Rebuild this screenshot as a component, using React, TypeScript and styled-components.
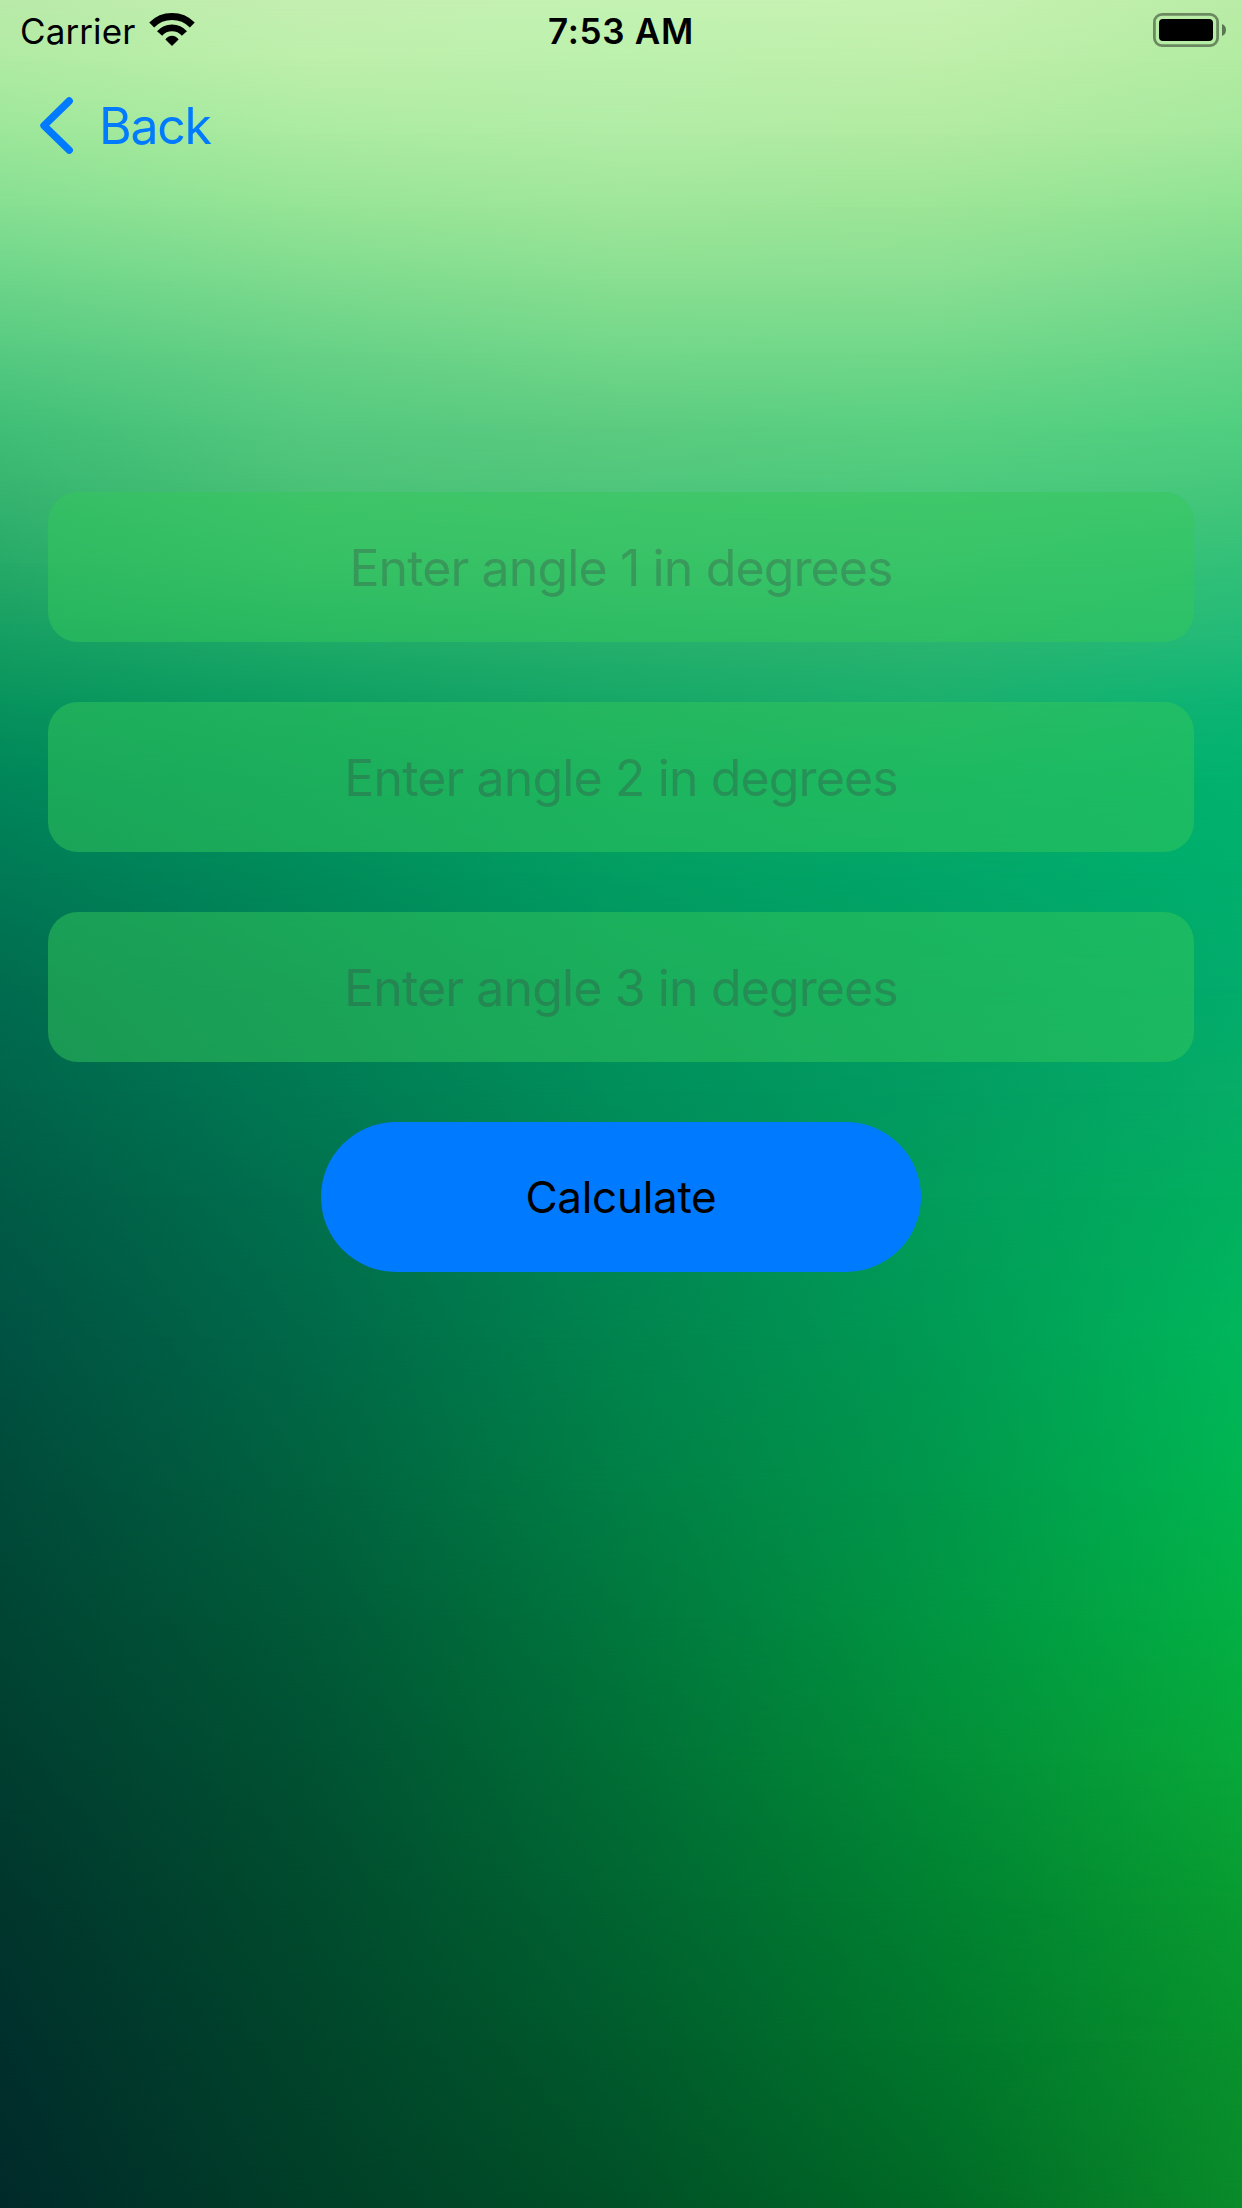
import React, { useState } from "react";
import styled, { createGlobalStyle } from "styled-components";

const GlobalStyle = createGlobalStyle`
  *, *::before, *::after { box-sizing: border-box; }
  body { margin: 0; background: #004f33; }
`;

type RGB = [number, number, number];

/* Wallpaper colours: one entry per height, with evenly spaced stops from left to right. */
const wallpaper: { y: number; stops: RGB[] }[] = [
  { y: 0, stops: [[186, 234, 170], [196, 240, 177], [196, 243, 179], [199, 242, 178], [186, 236, 167]] },
  { y: 60, stops: [[176, 235, 163], [189, 239, 171], [188, 240, 173], [191, 239, 170], [178, 236, 162]] },
  { y: 133, stops: [[156, 231, 154], [171, 235, 161], [177, 236, 166], [177, 235, 161], [166, 233, 158]] },
  { y: 207, stops: [[134, 223, 146], [150, 228, 150], [159, 230, 154], [156, 229, 151], [143, 227, 147]] },
  { y: 280, stops: [[108, 213, 137], [126, 219, 142], [137, 223, 145], [137, 223, 147], [122, 218, 141]] },
  { y: 353, stops: [[86, 202, 129], [102, 209, 134], [114, 215, 137], [113, 216, 137], [100, 212, 135]] },
  { y: 427, stops: [[64, 190, 119], [85, 201, 127], [92, 203, 128], [89, 208, 129], [80, 207, 128]] },
  { y: 480, stops: [[56, 182, 113], [76, 195, 120], [81, 199, 124], [79, 203, 125], [71, 200, 124]] },
  { y: 563, stops: [[39, 170, 104], [57, 186, 112], [61, 189, 116], [61, 192, 118], [50, 192, 120]] },
  { y: 640, stops: [[20, 158, 98], [30, 170, 103], [38, 176, 108], [42, 181, 112], [34, 186, 120]] },
  { y: 704, stops: [[8, 147, 93], [13, 158, 98], [22, 167, 103], [27, 175, 109], [12, 180, 116]] },
  { y: 775, stops: [[0, 135, 90], [4, 149, 94], [8, 163, 99], [8, 171, 105], [2, 178, 110]] },
  { y: 873, stops: [[0, 122, 85], [0, 140, 91], [2, 157, 98], [2, 166, 104], [0, 175, 109]] },
  { y: 986, stops: [[0, 108, 79], [0, 128, 86], [0, 148, 93], [2, 159, 99], [2, 172, 108]] },
  { y: 1091, stops: [[0, 100, 75], [0, 122, 83], [0, 143, 91], [2, 156, 97], [6, 173, 103]] },
  { y: 1197, stops: [[0, 91, 70], [0, 113, 78], [0, 136, 85], [2, 157, 91], [2, 176, 96]] },
  { y: 1338, stops: [[0, 82, 66], [0, 105, 72], [0, 132, 78], [0, 154, 84], [0, 182, 91]] },
  { y: 1490, stops: [[0, 74, 58], [0, 98, 63], [0, 127, 69], [0, 151, 75], [0, 181, 80]] },
  { y: 1619, stops: [[0, 69, 52], [0, 90, 56], [0, 119, 61], [0, 149, 66], [3, 176, 68]] },
  { y: 1760, stops: [[0, 62, 48], [0, 82, 51], [0, 111, 54], [2, 141, 56], [8, 168, 58]] },
  { y: 1901, stops: [[0, 54, 45], [0, 75, 46], [0, 101, 49], [0, 129, 49], [8, 156, 49]] },
  { y: 2042, stops: [[0, 48, 44], [0, 69, 43], [0, 91, 44], [0, 119, 44], [8, 146, 45]] },
  { y: 2208, stops: [[0, 42, 42], [0, 62, 40], [0, 80, 39], [0, 105, 38], [10, 138, 42]] },
];

const Screen = styled.main`
  display: grid;
  width: 1242px;
  height: 2208px;
  overflow: hidden;
  font-family: Inter, "Liberation Sans", sans-serif;
  color: #000;
`;

const Wallpaper = styled.div`
  grid-area: 1 / 1;
  display: grid;
`;

const WallpaperBand = styled.div<{ $stops: RGB[]; $from: number; $to: number }>`
  grid-area: 1 / 1;
  background: linear-gradient(to right, ${(p) => p.$stops.map((c) => `rgb(${c.join(",")})`).join(", ")});
  mask-image: linear-gradient(to bottom, transparent ${(p) => p.$from}px, #000 ${(p) => p.$to}px);
`;

const Content = styled.div`
  grid-area: 1 / 1;
  z-index: 1;
  display: flex;
  flex-direction: column;
`;

const StatusBar = styled.header`
  display: grid;
  grid-template-columns: 1fr auto 1fr;
  align-items: center;
  height: 60px;
  padding: 0 16px;
`;

const CarrierGroup = styled.div`
  display: flex;
  align-items: center;
  gap: 14px;
  padding-left: 4px;
`;

const CarrierName = styled.span`
  padding-top: 1px;
  font-size: 35px;
  line-height: 42px;
  letter-spacing: 0.1px;
`;

const Clock = styled.time`
  padding-top: 1px;
  font-size: 35px;
  line-height: 42px;
  font-weight: 600;
  letter-spacing: 0.7px;
`;

const BatteryIcon = styled.svg`
  justify-self: end;
`;

const NavBar = styled.nav`
  display: flex;
  align-items: center;
  height: 132px;
  padding: 0 38px;
`;

const BackButton = styled.button`
  display: flex;
  align-items: center;
  gap: 23px;
  padding: 0;
  border: 0;
  background: none;
  color: #007aff;
  font: inherit;
  font-size: 50px;
  line-height: 60px;
  letter-spacing: -1.3px;
`;

const Form = styled.form`
  display: flex;
  flex-direction: column;
  align-items: center;
  gap: 60px;
  padding: 300px 48px 0;
`;

const AngleField = styled.input`
  width: 100%;
  height: 150px;
  padding: 1px 24px 0;
  border: 0;
  border-radius: 30px;
  outline: 0;
  background: rgba(52, 199, 89, 0.5);
  color: #000;
  font: inherit;
  font-size: 50px;
  letter-spacing: -0.88px;
  text-align: center;

  &::placeholder {
    color: rgba(60, 60, 67, 0.3);
    opacity: 1;
  }
`;

const CalculateButton = styled.button`
  width: 600px;
  height: 150px;
  border: 0;
  border-radius: 75px;
  background: #007aff;
  color: #000;
  font: inherit;
  font-size: 44px;
  letter-spacing: -0.3px;
`;

function WifiIcon() {
  return (
    <svg width="46" height="34" viewBox="0 0 46 34" fill="none">
      <path d="M2.7 12A28.7 28.7 0 0 1 43.3 12" stroke="#000" strokeWidth="7" />
      <path d="M10.6 20.5A16.4 16.4 0 0 1 35.4 20.5" stroke="#000" strokeWidth="6.8" />
      <path d="M16.4 26.5A7.8 7.8 0 0 1 29.6 26.5L23 33Z" fill="#000" />
    </svg>
  );
}

function Battery() {
  return (
    <BatteryIcon width="73" height="34" viewBox="0 0 73 34">
      <rect x="1.4" y="1.4" width="63.2" height="31.2" rx="7.6" fill="none" stroke="#000" strokeOpacity="0.42" strokeWidth="2.8" />
      <rect x="6" y="6" width="54" height="22" rx="4" fill="#000" />
      <path d="M69 11C71.6 12 73 14.2 73 17S71.6 22 69 23Z" fill="#000" fillOpacity="0.5" />
    </BatteryIcon>
  );
}

function ChevronLeft() {
  return (
    <svg width="38" height="60" viewBox="0 0 38 60" fill="none">
      <path d="M31.2 5L6 29.6L31.2 54.2" stroke="currentColor" strokeWidth="7.4" strokeLinecap="round" strokeLinejoin="round" />
    </svg>
  );
}

export default function App() {
  const [angles, setAngles] = useState(["", "", ""]);

  const updateAngle = (index: number, value: string) =>
    setAngles((current) => current.map((angle, i) => (i === index ? value : angle)));

  return (
    <>
      <GlobalStyle />
      <Screen>
        <Wallpaper aria-hidden>
          {wallpaper.map((band, i) => (
            <WallpaperBand key={band.y} $stops={band.stops} $from={i === 0 ? -1 : wallpaper[i - 1].y} $to={band.y} />
          ))}
        </Wallpaper>
        <Content>
          <StatusBar>
            <CarrierGroup>
              <CarrierName>Carrier</CarrierName>
              <WifiIcon />
            </CarrierGroup>
            <Clock>7:53 AM</Clock>
            <Battery />
          </StatusBar>
          <NavBar>
            <BackButton type="button">
              <ChevronLeft />
              Back
            </BackButton>
          </NavBar>
          <Form onSubmit={(event) => event.preventDefault()}>
            {angles.map((angle, i) => (
              <AngleField
                key={i}
                inputMode="decimal"
                placeholder={`Enter angle ${i + 1} in degrees`}
                value={angle}
                onChange={(event) => updateAngle(i, event.target.value)}
              />
            ))}
            <CalculateButton type="submit">Calculate</CalculateButton>
          </Form>
        </Content>
      </Screen>
    </>
  );
}
